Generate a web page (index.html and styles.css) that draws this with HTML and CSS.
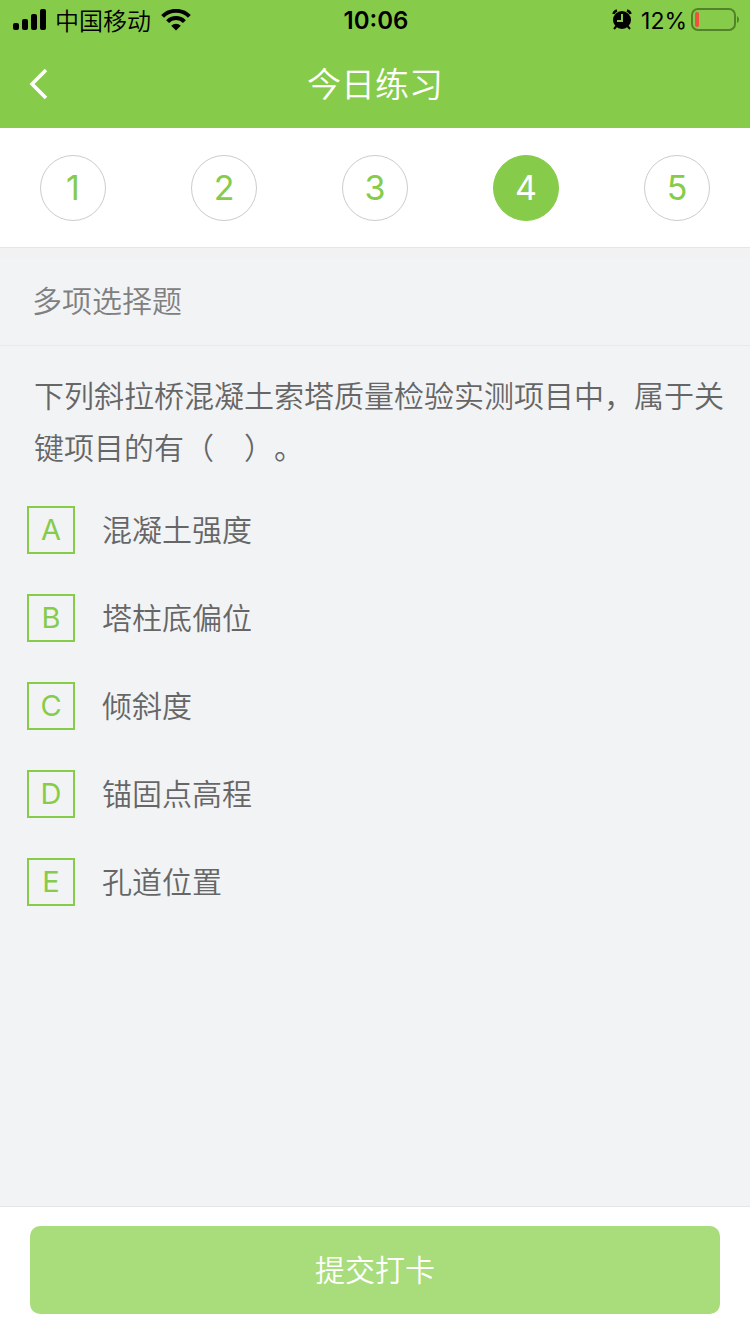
FILE: index.html
```html
<!DOCTYPE html>
<html lang="zh-CN">
<head>
<meta charset="utf-8">
<meta name="viewport" content="width=device-width, initial-scale=1">
<title>今日练习</title>
<link rel="stylesheet" href="styles.css">
</head>
<body>
<div class="app">
  <header class="header">
    <div class="status">
      <div class="status-left">
        <svg class="status-icon" width="34" height="22" viewBox="0 0 34 22" aria-hidden="true">
          <rect x="0" y="14" width="6" height="7" rx="2"/>
          <rect x="9" y="10" width="6" height="11" rx="2"/>
          <rect x="18" y="5" width="6" height="16" rx="2"/>
          <rect x="27" y="0" width="6" height="21" rx="2"/>
        </svg>
        <span class="carrier">中国移动</span>
        <svg class="status-icon" width="30" height="22" viewBox="0 0 30 22" aria-hidden="true">
          <g fill="none" stroke="#000" stroke-width="4">
            <path d="M1.600 7.400A19 19 0 0 1 28.400 7.400"/>
            <path d="M6.600 12.600A11.800 11.800 0 0 1 23.400 12.600"/>
          </g>
          <path d="M15 21.500L10.200 16.700A6.800 6.800 0 0 1 19.800 16.700Z"/>
        </svg>
      </div>
      <time class="clock">10:06</time>
      <div class="status-right">
        <svg class="status-icon" width="20" height="22" viewBox="0 0 20 22" aria-hidden="true">
          <circle cx="10" cy="11" r="9"/>
          <path d="M1.500 5Q2 2.500 5 1.500M18.500 5Q18 2.500 15 1.500" fill="none" stroke="#000" stroke-width="2.500"/>
          <path d="M4.500 17L2 20M15.500 17L18 20" fill="none" stroke="#000" stroke-width="2"/>
          <path d="M10 5V12H5" fill="none" stroke="#86cc4a" stroke-width="2"/>
        </svg>
        <span class="percent">12%</span>
        <svg class="status-icon" width="48" height="24" viewBox="0 0 48 24" aria-hidden="true">
          <rect x="1" y="1" width="43" height="21" rx="6" fill="none" stroke="#528229" stroke-width="2"/>
          <rect x="4" y="4" width="4" height="15" rx="2" fill="#f0503c"/>
          <path d="M46 8Q48 9 48 11.500Q48 14 46 15Z" fill="#528229"/>
        </svg>
      </div>
    </div>
    <div class="nav">
      <button class="back" type="button" aria-label="返回">
        <svg width="20" height="32" viewBox="0 0 20 32" aria-hidden="true"><path d="M18 2L4 16L18 30" fill="none" stroke="#fff" stroke-width="3.600"/></svg>
      </button>
      <h1 class="title">今日练习</h1>
    </div>
  </header>

  <nav class="steps">
    <button class="step" type="button">1</button>
    <button class="step" type="button">2</button>
    <button class="step" type="button">3</button>
    <button class="step step-current" type="button" aria-current="step">4</button>
    <button class="step" type="button">5</button>
  </nav>

  <main class="content">
    <h2 class="kind">多项选择题</h2>
    <p class="question" id="question">下列斜拉桥混凝土索塔质量检验实测项目中，属于关键项目的有（　）。</p>
    <div class="options" role="group" aria-labelledby="question">
      <label class="option"><span class="mark"><input class="box" type="checkbox" name="answer" value="A"><span class="letter">A</span></span><span class="answer">混凝土强度</span></label>
      <label class="option"><span class="mark"><input class="box" type="checkbox" name="answer" value="B"><span class="letter">B</span></span><span class="answer">塔柱底偏位</span></label>
      <label class="option"><span class="mark"><input class="box" type="checkbox" name="answer" value="C"><span class="letter">C</span></span><span class="answer">倾斜度</span></label>
      <label class="option"><span class="mark"><input class="box" type="checkbox" name="answer" value="D"><span class="letter">D</span></span><span class="answer">锚固点高程</span></label>
      <label class="option"><span class="mark"><input class="box" type="checkbox" name="answer" value="E"><span class="letter">E</span></span><span class="answer">孔道位置</span></label>
    </div>
  </main>

  <footer class="footer">
    <button class="submit" type="button">提交打卡</button>
  </footer>
</div>
</body>
</html>
```
FILE: styles.css
```css
* {
  box-sizing: border-box;
}

body {
  margin: 0;
  background: #f2f3f5;
  color: #666;
  font-family: Inter, "Noto Sans CJK SC", sans-serif;
  font-size: 30px;
  font-weight: 350;
  text-spacing-trim: space-all;
}

button {
  margin: 0;
  padding: 0;
  border: 0;
  background: none;
  font: inherit;
}

svg {
  display: block;
}

.app {
  display: flex;
  flex-direction: column;
  min-height: 100vh;
}

.header {
  background: #86cc4a;
}

.status {
  display: grid;
  grid-template-columns: 1fr auto 1fr;
  align-items: center;
  height: 40px;
  padding: 0 11px 0 13px;
  color: #000;
  font-size: 24px;
  line-height: 42px;
}

.status-left,
.status-right {
  display: flex;
  align-items: center;
  height: 40px;
}

.status-left {
  gap: 8px;
}

.status-icon {
  margin-bottom: 2px;
}

.carrier {
  margin-right: 2px;
  padding-top: 2px;
}

.status-right {
  justify-content: flex-end;
  gap: 4px;
}

.percent {
  margin-left: 5px;
  font-size: 23px;
  font-weight: 400;
}

.clock {
  font-weight: 600;
}

.nav {
  display: grid;
  grid-template-columns: 1fr auto 1fr;
  align-items: center;
  height: 88px;
  padding: 0 28px;
  color: #fff;
}

.back {
  width: 20px;
}

.title {
  margin: 0;
  padding-top: 2px;
  font-size: 34px;
  font-weight: 350;
  line-height: 48px;
}

.steps {
  display: flex;
  align-items: center;
  justify-content: space-between;
  height: 120px;
  padding: 0 40px;
  border-bottom: 1px solid #e6e6e6;
  background: #fff;
}

.step {
  width: 66px;
  height: 66px;
  border: 1px solid #ccc;
  border-radius: 50%;
  color: #86cc4a;
  font-size: 34px;
  font-weight: 400;
}

.step-current {
  border-color: #86cc4a;
  background: #86cc4a;
  color: #fff;
}

.content {
  flex: 1;
  border-top: 10px solid #f2f2f2;
}

.kind {
  margin: 0;
  padding: 0 32px;
  border-bottom: 1px solid #e8eaec;
  color: #808080;
  font-size: 30px;
  font-weight: 350;
  line-height: 87px;
}

.question {
  margin: 0;
  padding: 24px 24px 12px 34px;
  line-height: 52px;
}

.options {
  display: flex;
  flex-direction: column;
}

.option {
  display: flex;
  align-items: center;
  gap: 27px;
  height: 88px;
  padding: 0 27px;
}

.mark {
  display: grid;
  place-items: center;
  color: #86cc4a;
}

.box,
.letter {
  grid-area: 1 / 1;
}

.box {
  width: 48px;
  height: 48px;
  margin: 0;
  border: 2px solid #86cc4a;
  appearance: none;
}

.box:checked {
  background: #86cc4a;
}

.box:checked + .letter {
  color: #fff;
}

.letter {
  font-size: 29px;
  font-weight: 400;
  line-height: 48px;
  pointer-events: none;
}

.answer {
  line-height: 48px;
}

.footer {
  padding: 19px 30px 20px;
  border-top: 1px solid #e6e6e6;
  background: #fff;
}

.submit {
  display: block;
  width: 100%;
  height: 88px;
  border-radius: 10px;
  background: #a9dc7a;
  color: #fff;
  line-height: 88px;
}
```
